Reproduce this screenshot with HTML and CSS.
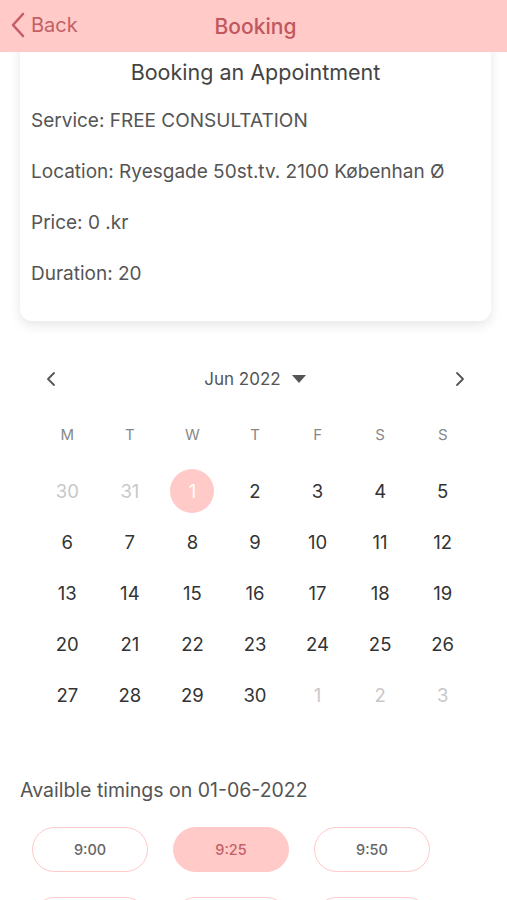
FILE: index.html
```html
<!DOCTYPE html>
<html>
<head>
    <title>Booking</title>
    <link rel="stylesheet" href="styles.css">
</head>
<body>
    <div class="topbar">
        <a class="back" href="#">
            <svg width="16" height="26" viewBox="0 0 16 26"><path d="M13 2 L3 13 L13 24" fill="none" stroke="#c45f66" stroke-width="2.6" stroke-linecap="round" stroke-linejoin="round"/></svg>
            <span>Back</span>
        </a>
        <div class="topbar-title">Booking</div>
    </div>

    <div class="screen">
        <div class="card">
            <h1 class="card-title">Booking an Appointment</h1>
            <p class="card-row">Service: FREE CONSULTATION</p>
            <p class="card-row">Location: Ryesgade 50st.tv. 2100 Københan Ø</p>
            <p class="card-row">Price: 0 .kr</p>
            <p class="card-row">Duration: 20</p>
        </div>

        <div class="calendar">
            <div class="cal-nav">
                <svg width="10" height="16" viewBox="0 0 10 16"><path d="M8 2 L2 8 L8 14" fill="none" stroke="#555" stroke-width="1.8" stroke-linecap="round" stroke-linejoin="round"/></svg>
                <div class="cal-month">Jun 2022
                    <svg width="16" height="10" viewBox="0 0 16 10"><path d="M1 1 H15 L8 9 Z" fill="#555"/></svg>
                </div>
                <svg width="10" height="16" viewBox="0 0 10 16"><path d="M2 2 L8 8 L2 14" fill="none" stroke="#555" stroke-width="1.8" stroke-linecap="round" stroke-linejoin="round"/></svg>
            </div>
            <div class="cal-week">
                <span>M</span><span>T</span><span>W</span><span>T</span><span>F</span><span>S</span><span>S</span>
            </div>
            <div class="cal-days">
                <span class="muted">30</span><span class="muted">31</span><span class="selected"><b>1</b></span><span>2</span><span>3</span><span>4</span><span>5</span>
                <span>6</span><span>7</span><span>8</span><span>9</span><span>10</span><span>11</span><span>12</span>
                <span>13</span><span>14</span><span>15</span><span>16</span><span>17</span><span>18</span><span>19</span>
                <span>20</span><span>21</span><span>22</span><span>23</span><span>24</span><span>25</span><span>26</span>
                <span>27</span><span>28</span><span>29</span><span>30</span><span class="muted">1</span><span class="muted">2</span><span class="muted">3</span>
            </div>
        </div>

        <div class="timings">
            <p class="timings-label">Availble timings on 01-06-2022</p>
            <div class="slots">
                <button class="slot">9:00</button>
                <button class="slot active">9:25</button>
                <button class="slot">9:50</button>
                <button class="slot">10:15</button>
                <button class="slot">10:40</button>
                <button class="slot">11:05</button>
            </div>
        </div>
    </div>
</body>
</html>
```

FILE: styles.css
```css
body {
    font-family: Inter, "Noto Sans", sans-serif;
    margin: 0;
    padding: 0;
    height: 900px;
    overflow: hidden;
    background-color: #fff;
    color: #555;
}

.topbar {
    position: relative;
    z-index: 2;
    height: 52px;
    background-color: #ffcac8;
    display: flex;
    align-items: center;
    justify-content: center;
}

.back {
    position: absolute;
    left: 10px;
    top: 12px;
    display: flex;
    align-items: center;
    gap: 5px;
    color: #c45f66;
    text-decoration: none;
    font-size: 20px;
}

.topbar-title {
    color: #c0575e;
    font-size: 21px;
    font-weight: 500;
    margin-left: 4px;
}

.screen {
    height: 848px;
    overflow: hidden;
}

.card {
    margin: -20px 16px 0 20px;
    padding: 28px 11px 22px 11px;
    background-color: #fff;
    border-radius: 12px;
    box-shadow: 0 4px 12px rgba(0, 0, 0, 0.1);
}

.card-title {
    margin: 0 0 11px 0;
    text-align: center;
    font-size: 21.5px;
    font-weight: 400;
    line-height: 24px;
    color: #444;
}

.card-row {
    margin: 0;
    font-size: 19px;
    line-height: 51px;
    color: #555;
}

.calendar {
    padding: 38px 33px 0 36px;
}

.cal-nav {
    height: 40px;
    padding: 0 9px 0 10px;
    display: flex;
    align-items: center;
    justify-content: space-between;
}

.cal-month {
    display: flex;
    align-items: center;
    gap: 10px;
    font-size: 17px;
    color: #555;
}

.cal-week,
.cal-days {
    display: grid;
    grid-template-columns: repeat(7, 1fr);
    text-align: center;
}

.cal-week {
    margin-top: 10px;
    height: 52px;
    line-height: 52px;
    font-size: 15px;
    color: #888;
}

.cal-days {
    margin-top: 4.5px;
    grid-auto-rows: 51px;
    font-size: 18.5px;
    color: #333;
}

.cal-days span {
    display: flex;
    align-items: center;
    justify-content: center;
}

.cal-days .muted {
    color: #c8c8c8;
}

.cal-days .selected b {
    width: 44px;
    height: 44px;
    border-radius: 50%;
    background-color: #ffcac8;
    color: #fff;
    font-weight: 400;
    display: flex;
    align-items: center;
    justify-content: center;
}

.timings {
    padding: 0 20px;
}

.timings-label {
    margin: 57px 0 0 0;
    font-size: 19.5px;
    line-height: 24px;
    color: #555;
}

.slots {
    margin-top: 25px;
    padding-left: 12px;
    display: grid;
    grid-template-columns: repeat(3, 116px);
    column-gap: 25px;
    row-gap: 25px;
}

.slot {
    height: 45px;
    border: 1px solid #ffcac8;
    border-radius: 23px;
    background-color: #fff;
    font-family: Inter, sans-serif;
    font-size: 14.5px;
    font-weight: 500;
    color: #666;
}

.slot.active {
    background-color: #ffcac8;
    color: #c45f66;
}
```
